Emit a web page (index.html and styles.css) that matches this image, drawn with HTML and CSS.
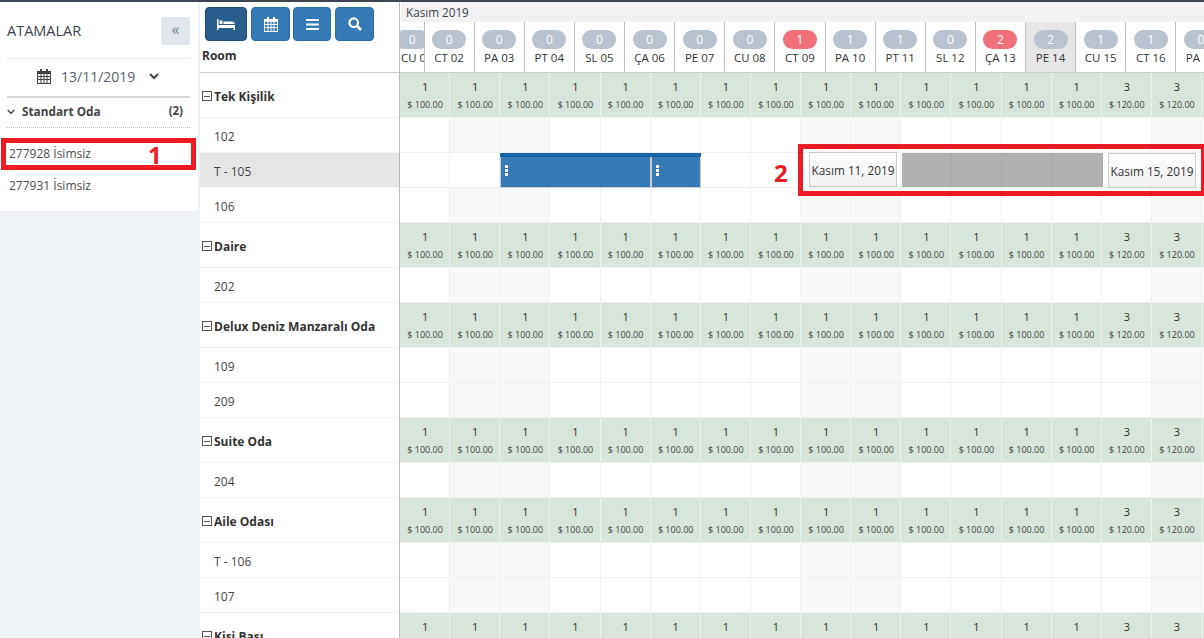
FILE: index.html
```html
<!DOCTYPE html>
<html lang="tr">
<head>
<meta charset="utf-8">
<title>Atamalar</title>
<link rel="stylesheet" href="styles.css">
</head>
<body>
<div class="page">
<aside class="side">
  <div class="side-head"><span class="side-title">ATAMALAR</span><button class="collapse">«</button></div>
  <div class="date-row">
    <svg class="cal-ic" viewBox="0 0 14 15"><path fill="#444" d="M3 0h2v2h4V0h2v2h3v13H0V2h3zM1 5v2h2.500V5zm3.500 0v2h2V5zm3 0v2h2V5zm3 0v2H13V5zM1 8v2h2.500V8zm3.500 0v2h2V8zm3 0v2h2V8zm3 0v2H13V8zM1 11v3h2.500v-3zm3.500 0v3h2v-3zm3 0v3h2v-3zm3 0v3H13v-3z"/></svg>
    <span class="date-val">13/11/2019</span>
    <svg class="chev" viewBox="0 0 10 7"><path d="M1 1l4 4 4-4" fill="none" stroke="#444" stroke-width="2"/></svg>
  </div>
  <div class="cat-head">
    <svg class="chev-s" viewBox="0 0 8 6"><path d="M.7 1l3.300 3.300L7.300 1" fill="none" stroke="#444" stroke-width="1.400"/></svg>
    <span class="cat-name">Standart Oda</span><span class="cat-count">(2)</span>
  </div>
  <div class="item first">277928 İsimsiz</div>
  <div class="item">277931 İsimsiz</div>
</aside>
<main class="sched">
  <div class="rooms">
    <div class="rooms-head">
      <div class="tools">
        <button class="tool active w42"><svg viewBox="0 0 18 11" class="ic-bed"><path fill="#fff" d="M0 0h1.500v6H18v5h-1.500V9h-15v2H0zM2.500 1.500h3v3.500h-3zM6.500 2.500H15a3 3 0 0 1 3 2.500H6.500z"/></svg></button>
        <button class="tool w39"><svg viewBox="0 0 14 15" class="ic-cal"><path fill="#fff" d="M3 0h2v2h4V0h2v2h3v13H0V2h3zM1 5v2h2.500V5zm3.500 0v2h2V5zm3 0v2h2V5zm3 0v2H13V5zM1 8v2h2.500V8zm3.500 0v2h2V8zm3 0v2h2V8zm3 0v2H13V8zM1 11v3h2.500v-3zm3.500 0v3h2v-3zm3 0v3h2v-3zm3 0v3H13v-3z"/></svg></button>
        <button class="tool w38"><svg viewBox="0 0 13 11" class="ic-bars"><path fill="#fff" d="M0 0h13v2H0zM0 4.500h13v2H0zM0 9h13v2H0z"/></svg></button>
        <button class="tool w39"><svg viewBox="0 0 14 14" class="ic-search"><circle cx="5.700" cy="5.700" r="4.300" fill="none" stroke="#fff" stroke-width="2.200"/><path d="M9 9l4 4" stroke="#fff" stroke-width="2.600"/></svg></button>
      </div>
      <div class="room-title">Room</div>
    </div>
    <div class="r cat"><i class="minus"></i>Tek Kişilik</div>
    <div class="r room">102</div>
    <div class="r room sel">T - 105</div>
    <div class="r room">106</div>
    <div class="r cat"><i class="minus"></i>Daire</div>
    <div class="r room">202</div>
    <div class="r cat"><i class="minus"></i>Delux Deniz Manzaralı Oda</div>
    <div class="r room">109</div>
    <div class="r room">209</div>
    <div class="r cat"><i class="minus"></i>Suite Oda</div>
    <div class="r room">204</div>
    <div class="r cat"><i class="minus"></i>Aile Odası</div>
    <div class="r room">T - 106</div>
    <div class="r room">107</div>
    <div class="r cat"><i class="minus"></i>Kişi Başı</div>
  </div>
  <div class="timeline">
    <div class="month">Kasım 2019</div>
    <div class="days">
      <div class="d"><b class="p">0</b>CU 01</div><div class="d"><b class="p">0</b>CT 02</div><div class="d"><b class="p">0</b>PA 03</div><div class="d"><b class="p">0</b>PT 04</div><div class="d"><b class="p">0</b>SL 05</div><div class="d"><b class="p">0</b>ÇA 06</div><div class="d"><b class="p">0</b>PE 07</div><div class="d"><b class="p">0</b>CU 08</div><div class="d"><b class="p red">1</b>CT 09</div><div class="d"><b class="p">1</b>PA 10</div><div class="d"><b class="p">1</b>PT 11</div><div class="d"><b class="p">0</b>SL 12</div><div class="d"><b class="p red">2</b>ÇA 13</div><div class="d today"><b class="p">2</b>PE 14</div><div class="d"><b class="p">1</b>CU 15</div><div class="d"><b class="p">1</b>CT 16</div><div class="d"><b class="p">0</b>PA 17</div>
    </div>
    <div class="body">
      <div class="g rates"><div class="t"><b>1</b><span>$ 100.00</span></div><div class="t"><b>1</b><span>$ 100.00</span></div><div class="t"><b>1</b><span>$ 100.00</span></div><div class="t"><b>1</b><span>$ 100.00</span></div><div class="t"><b>1</b><span>$ 100.00</span></div><div class="t"><b>1</b><span>$ 100.00</span></div><div class="t"><b>1</b><span>$ 100.00</span></div><div class="t"><b>1</b><span>$ 100.00</span></div><div class="t"><b>1</b><span>$ 100.00</span></div><div class="t"><b>1</b><span>$ 100.00</span></div><div class="t"><b>1</b><span>$ 100.00</span></div><div class="t"><b>1</b><span>$ 100.00</span></div><div class="t"><b>1</b><span>$ 100.00</span></div><div class="t"><b>1</b><span>$ 100.00</span></div><div class="t"><b>3</b><span>$ 120.00</span></div><div class="t"><b>3</b><span>$ 120.00</span></div><div class="t"><b>3</b><span>$ 120.00</span></div></div>
      <div class="g cells"><i></i><i class="we"></i><i class="we"></i><i></i><i></i><i></i><i></i><i></i><i class="we"></i><i class="we"></i><i></i><i></i><i></i><i></i><i></i><i class="we"></i><i class="we"></i></div>
      <div class="g cells plain"><i></i><i></i><i></i><i></i><i></i><i></i><i></i><i></i><i></i><i></i><i></i><i></i><i></i><i></i><i></i><i></i><i></i></div>
      <div class="g cells"><i></i><i class="we"></i><i class="we"></i><i></i><i></i><i></i><i></i><i></i><i class="we"></i><i class="we"></i><i></i><i></i><i></i><i></i><i></i><i class="we"></i><i class="we"></i></div>
      <div class="g rates"><div class="t"><b>1</b><span>$ 100.00</span></div><div class="t"><b>1</b><span>$ 100.00</span></div><div class="t"><b>1</b><span>$ 100.00</span></div><div class="t"><b>1</b><span>$ 100.00</span></div><div class="t"><b>1</b><span>$ 100.00</span></div><div class="t"><b>1</b><span>$ 100.00</span></div><div class="t"><b>1</b><span>$ 100.00</span></div><div class="t"><b>1</b><span>$ 100.00</span></div><div class="t"><b>1</b><span>$ 100.00</span></div><div class="t"><b>1</b><span>$ 100.00</span></div><div class="t"><b>1</b><span>$ 100.00</span></div><div class="t"><b>1</b><span>$ 100.00</span></div><div class="t"><b>1</b><span>$ 100.00</span></div><div class="t"><b>1</b><span>$ 100.00</span></div><div class="t"><b>3</b><span>$ 120.00</span></div><div class="t"><b>3</b><span>$ 120.00</span></div><div class="t"><b>3</b><span>$ 120.00</span></div></div>
      <div class="g cells"><i></i><i class="we"></i><i class="we"></i><i></i><i></i><i></i><i></i><i></i><i class="we"></i><i class="we"></i><i></i><i></i><i></i><i></i><i></i><i class="we"></i><i class="we"></i></div>
      <div class="g rates"><div class="t"><b>1</b><span>$ 100.00</span></div><div class="t"><b>1</b><span>$ 100.00</span></div><div class="t"><b>1</b><span>$ 100.00</span></div><div class="t"><b>1</b><span>$ 100.00</span></div><div class="t"><b>1</b><span>$ 100.00</span></div><div class="t"><b>1</b><span>$ 100.00</span></div><div class="t"><b>1</b><span>$ 100.00</span></div><div class="t"><b>1</b><span>$ 100.00</span></div><div class="t"><b>1</b><span>$ 100.00</span></div><div class="t"><b>1</b><span>$ 100.00</span></div><div class="t"><b>1</b><span>$ 100.00</span></div><div class="t"><b>1</b><span>$ 100.00</span></div><div class="t"><b>1</b><span>$ 100.00</span></div><div class="t"><b>1</b><span>$ 100.00</span></div><div class="t"><b>3</b><span>$ 120.00</span></div><div class="t"><b>3</b><span>$ 120.00</span></div><div class="t"><b>3</b><span>$ 120.00</span></div></div>
      <div class="g cells"><i></i><i class="we"></i><i class="we"></i><i></i><i></i><i></i><i></i><i></i><i class="we"></i><i class="we"></i><i></i><i></i><i></i><i></i><i></i><i class="we"></i><i class="we"></i></div>
      <div class="g cells"><i></i><i class="we"></i><i class="we"></i><i></i><i></i><i></i><i></i><i></i><i class="we"></i><i class="we"></i><i></i><i></i><i></i><i></i><i></i><i class="we"></i><i class="we"></i></div>
      <div class="g rates"><div class="t"><b>1</b><span>$ 100.00</span></div><div class="t"><b>1</b><span>$ 100.00</span></div><div class="t"><b>1</b><span>$ 100.00</span></div><div class="t"><b>1</b><span>$ 100.00</span></div><div class="t"><b>1</b><span>$ 100.00</span></div><div class="t"><b>1</b><span>$ 100.00</span></div><div class="t"><b>1</b><span>$ 100.00</span></div><div class="t"><b>1</b><span>$ 100.00</span></div><div class="t"><b>1</b><span>$ 100.00</span></div><div class="t"><b>1</b><span>$ 100.00</span></div><div class="t"><b>1</b><span>$ 100.00</span></div><div class="t"><b>1</b><span>$ 100.00</span></div><div class="t"><b>1</b><span>$ 100.00</span></div><div class="t"><b>1</b><span>$ 100.00</span></div><div class="t"><b>3</b><span>$ 120.00</span></div><div class="t"><b>3</b><span>$ 120.00</span></div><div class="t"><b>3</b><span>$ 120.00</span></div></div>
      <div class="g cells"><i></i><i class="we"></i><i class="we"></i><i></i><i></i><i></i><i></i><i></i><i class="we"></i><i class="we"></i><i></i><i></i><i></i><i></i><i></i><i class="we"></i><i class="we"></i></div>
      <div class="g rates"><div class="t"><b>1</b><span>$ 100.00</span></div><div class="t"><b>1</b><span>$ 100.00</span></div><div class="t"><b>1</b><span>$ 100.00</span></div><div class="t"><b>1</b><span>$ 100.00</span></div><div class="t"><b>1</b><span>$ 100.00</span></div><div class="t"><b>1</b><span>$ 100.00</span></div><div class="t"><b>1</b><span>$ 100.00</span></div><div class="t"><b>1</b><span>$ 100.00</span></div><div class="t"><b>1</b><span>$ 100.00</span></div><div class="t"><b>1</b><span>$ 100.00</span></div><div class="t"><b>1</b><span>$ 100.00</span></div><div class="t"><b>1</b><span>$ 100.00</span></div><div class="t"><b>1</b><span>$ 100.00</span></div><div class="t"><b>1</b><span>$ 100.00</span></div><div class="t"><b>3</b><span>$ 120.00</span></div><div class="t"><b>3</b><span>$ 120.00</span></div><div class="t"><b>3</b><span>$ 120.00</span></div></div>
      <div class="g cells"><i></i><i class="we"></i><i class="we"></i><i></i><i></i><i></i><i></i><i></i><i class="we"></i><i class="we"></i><i></i><i></i><i></i><i></i><i></i><i class="we"></i><i class="we"></i></div>
      <div class="g cells"><i></i><i class="we"></i><i class="we"></i><i></i><i></i><i></i><i></i><i></i><i class="we"></i><i class="we"></i><i></i><i></i><i></i><i></i><i></i><i class="we"></i><i class="we"></i></div>
      <div class="g rates"><div class="t"><b>1</b><span>$ 100.00</span></div><div class="t"><b>1</b><span>$ 100.00</span></div><div class="t"><b>1</b><span>$ 100.00</span></div><div class="t"><b>1</b><span>$ 100.00</span></div><div class="t"><b>1</b><span>$ 100.00</span></div><div class="t"><b>1</b><span>$ 100.00</span></div><div class="t"><b>1</b><span>$ 100.00</span></div><div class="t"><b>1</b><span>$ 100.00</span></div><div class="t"><b>1</b><span>$ 100.00</span></div><div class="t"><b>1</b><span>$ 100.00</span></div><div class="t"><b>1</b><span>$ 100.00</span></div><div class="t"><b>1</b><span>$ 100.00</span></div><div class="t"><b>1</b><span>$ 100.00</span></div><div class="t"><b>1</b><span>$ 100.00</span></div><div class="t"><b>3</b><span>$ 120.00</span></div><div class="t"><b>3</b><span>$ 120.00</span></div><div class="t"><b>3</b><span>$ 120.00</span></div></div>
      <div class="booking"><span class="seg seg-a"><em class="grip"></em></span><span class="seg seg-b"><em class="grip"></em></span></div>
      <div class="ghost"></div>
      <div class="stamp stamp-a">Kasım 11, 2019</div>
      <div class="stamp stamp-b">Kasım 15, 2019</div>
    </div>
  </div>
</main>
<div class="mark mark-1"></div><div class="num num-1">1</div>
<div class="mark mark-2"></div><div class="num num-2">2</div>
</div>
</body>
</html>
```

FILE: styles.css
```css
* { box-sizing: border-box; }
html, body { margin: 0; height: 100%; }
body { overflow: hidden; background: #fff; font-family: "Open Sans", "Noto Sans", sans-serif; color: #333; font-size: 12px; }
.page { position: relative; width: 1204px; height: 638px; overflow: hidden; display: flex; align-items: flex-start; border-top: 2px solid #3e4653; background: #eef1f5; }

.side { width: 198px; height: 209px; flex: none; background: #fff; padding: 0 8px 0 7px; border-radius: 0 0 4px 0; }
.side-head { height: 57px; display: flex; align-items: center; justify-content: space-between; padding-top: 1px; border-bottom: 1px solid #eee; }
.side-title { font-size: 14.500px; color: #3b4350; }
.collapse { width: 29px; height: 28px; border: 0; border-radius: 3px; background: #e1e5ec; color: #7b8794; font: 16px/24px "Open Sans", sans-serif; padding: 0 0 4px; }
.date-row { height: 39px; display: flex; align-items: center; padding: 0 0 2px 30px; border-bottom: 2px solid #d6d6d6; }
.cal-ic { width: 14px; height: 15px; margin-right: 10px; }
.date-val { font-size: 14px; color: #5b626c; }
.chev { width: 10px; height: 7px; margin-left: 14px; }
.cat-head { height: 30px; display: flex; align-items: center; border-bottom: 1px dotted #bbb; padding: 0 7px 4px 0; }
.chev-s { width: 8px; height: 6px; margin: 2px 7px 0 0; }
.cat-name { font-weight: 700; font-size: 11.800px; color: #444; flex: 1; }
.cat-count { font-weight: 700; font-size: 11.500px; color: #444; }
.item { height: 32px; line-height: 32px; padding-left: 2px; font-size: 12px; color: #4d4d4d; }
.item.first { margin-top: 10px; }

.sched { flex: 1; display: flex; height: 636px; margin-left: 2px; background: #fff; min-width: 0; }
.rooms { width: 200px; flex: none; border-right: 1px solid #bcbcbc; }
.rooms-head { height: 71px; border-bottom: 1px solid #ccc; padding: 5px 0 0 5px; }
.tools { display: flex; gap: 4px; height: 34px; }
.tool { height: 34px; border: 1px solid #2e6da4; border-radius: 4px; background: #337ab7; display: flex; align-items: center; justify-content: center; padding: 0; }
.tool.active { background: #285e8e; border-color: #204d74; }
.tool.w38 { margin-left: -1px; }
.w42 { width: 42px; }
.w39 { width: 39px; }
.w38 { width: 38px; }
.ic-bed { width: 18px; height: 11px; }
.ic-cal { width: 14px; height: 15px; }
.ic-bars { width: 13px; height: 11px; }
.ic-search { width: 14px; height: 14px; }
.room-title { font-weight: 700; font-size: 12px; margin: 6px 0 0 -3px; color: #333; line-height: 17px; }
.r { display: flex; align-items: center; border-bottom: 1px solid #f2f2f2; }
.cat { height: 45px; padding: 2px 0 0 2px; font-weight: 700; font-size: 12px; color: #333; }
.room { height: 35px; padding: 2px 0 0 14px; font-size: 12px; color: #444; }
.room.sel { background: #e5e5e5; }
.minus { width: 10px; height: 10px; margin-right: 2px; border: 1px solid #555; flex: none; background: linear-gradient(#555, #555) center / 6px 1px no-repeat; }

.timeline { flex: 1; min-width: 0; overflow: hidden; }
.month { height: 20px; background: #f2f2f2; line-height: 21px; padding-left: 5px; margin-left: 1px; font-size: 11.700px; color: #3b4350; }
.days { display: grid; grid-template-columns: 24.500px repeat(16, 50.140px); height: 51px; border-bottom: 1px solid #ccc; background: #fff; }
.d { height: 50px; border-right: 1px solid #bcbcbc; display: flex; flex-direction: column; align-items: center; font-size: 11.500px; color: #333; overflow: hidden; white-space: nowrap; padding-top: 8px; line-height: 16px; }
.d:first-child { align-items: flex-start; padding-left: 1px; }
.today { background: #e6e6e6; }
.p { width: 34px; height: 19px; flex: none; align-self: center; margin-bottom: 1px; border-radius: 10px; background: #b9c2cf; color: #fff; font-weight: 400; text-align: center; line-height: 19px; font-size: 12px; }
.p.red { background: #f0707b; }
.body { position: relative; }
.g { display: grid; grid-template-columns: repeat(17, 50.140px); }
.rates { height: 45px; }
.cells { height: 35px; }
.t { background: #d7e5da; border-right: 1px solid #eef2ef; border-bottom: 1px solid #eef2ef; display: flex; flex-direction: column; align-items: center; padding: 6px 0 0 1px; }
.t b { font-weight: 400; font-size: 11px; line-height: 16px; color: #333; }
.t span { font-size: 9px; line-height: 16px; color: #444; margin-top: 2px; }
.cells i { display: block; border-right: 1px solid #f0f0f0; border-bottom: 1px solid #f0f0f0; }
.cells i.we { background: #f8f8f8; }
.plain i { background: #fff; }

.booking { position: absolute; left: 100px; top: 80px; width: 201px; height: 35px; display: flex; border-top: 4px solid #1565a8; background: #ccc; }
.seg { background: #337ab7; height: 30px; margin-left: 1px; position: relative; }
.seg-a { width: 149px; }
.seg-b { width: 48px; margin-left: 2px; }
.grip { position: absolute; left: 4px; top: 8px; width: 3px; height: 11px; background: repeating-linear-gradient(#fff 0 3px, transparent 3px 4px); }
.ghost { position: absolute; left: 502px; top: 80px; width: 201px; height: 34px; background: #b0b0b0 linear-gradient(90deg, transparent 49px, #a9a9a9 49px, #a9a9a9 50px, transparent 50px, transparent 99px, #a9a9a9 99px, #a9a9a9 100px, transparent 100px, transparent 150px, #a9a9a9 150px, #a9a9a9 151px, transparent 151px); }
.stamp { position: absolute; width: 88px; height: 35px; border: 1px solid #ccc; background: linear-gradient(#fff, #f0f0f0); font-size: 11.800px; line-height: 35px; text-align: center; white-space: nowrap; color: #333; }
.stamp-a { left: 409px; top: 79px; }
.stamp-b { left: 708px; top: 80px; }

.mark { position: absolute; border: 5px solid #ed1c24; pointer-events: none; }
.mark-1 { left: 1px; top: 136px; width: 195px; height: 32px; }
.mark-2 { left: 798px; top: 142px; width: 408px; height: 52px; }
.num { position: absolute; color: #ed1c24; font-weight: 700; font-size: 24px; line-height: 24px; }
.num-1 { left: 148px; top: 141px; }
.num-2 { left: 774px; top: 159px; }
```
